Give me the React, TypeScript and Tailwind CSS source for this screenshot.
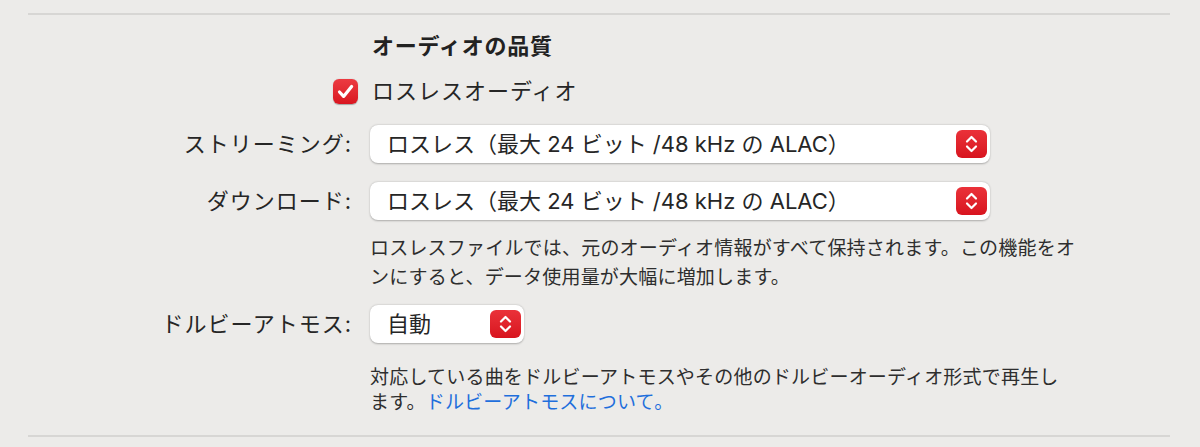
import React from "react";

const font = { fontFamily: '"Inter", "Noto Sans CJK JP", sans-serif' };

function Checkbox() {
  return (
    <div className="w-[25px] h-[25px] rounded-[6px] bg-gradient-to-b from-[#ec3a41] to-[#d9141f] shadow-[0_0.5px_1px_rgba(0,0,0,0.3)] flex items-center justify-center">
      <svg width="25" height="25" viewBox="0 0 25 25">
        <path
          d="M6.5 13 L10.6 17.4 L18.6 7.4"
          fill="none"
          stroke="white"
          strokeWidth="3.2"
          strokeLinecap="round"
          strokeLinejoin="round"
        />
      </svg>
    </div>
  );
}

function Stepper() {
  return (
    <div className="w-[31px] h-[28px] rounded-[6px] bg-gradient-to-b from-[#ea3139] to-[#d8131e] flex items-center justify-center">
      <svg width="31" height="28" viewBox="0 0 31 28">
        <path
          d="M11 11.5 L15.5 7 L20 11.5 M11 16.5 L15.5 21 L20 16.5"
          fill="none"
          stroke="white"
          strokeWidth="2.2"
          strokeLinecap="round"
          strokeLinejoin="round"
        />
      </svg>
    </div>
  );
}

function Popup({ value, width }: { value: string; width: string }) {
  return (
    <div
      className={`${width} h-[38px] bg-white rounded-[8px] shadow-[0_0.5px_2px_rgba(0,0,0,0.28)] flex items-center justify-between pl-[17px] pr-[3px]`}
    >
      <span className="text-[22px] text-[#262626] whitespace-nowrap">{value}</span>
      <Stepper />
    </div>
  );
}

function Row({ label, children }: { label: React.ReactNode; children: React.ReactNode }) {
  return (
    <div className="flex items-center gap-[18px]">
      <div className="w-[324px] flex justify-end text-[22px] tracking-[1px] text-[#262626]">{label}</div>
      <div className="flex-1">{children}</div>
    </div>
  );
}

export default function App() {
  return (
    <div className="w-full h-[447px] bg-[#ecebe9] pt-[13px] pl-[28px] pr-[30px] overflow-hidden" style={font}>
      <div className="h-[2px] bg-[#d7d6d4]" />

      <div className="mt-[16px] flex gap-[18px]">
        <div className="w-[324px]" />
        <div className="pl-[2px] text-[22px] leading-[30px] tracking-[0.8px] font-bold text-[#222]">オーディオの品質</div>
      </div>

      <div className="mt-[15px] flex items-center h-[30px]">
        <div className="w-[330px] flex justify-end">
          <Checkbox />
        </div>
        <span className="ml-[14px] text-[22px] tracking-[1px] text-[#262626]">ロスレスオーディオ</span>
      </div>

      <div className="mt-[19px]">
        <Row label="ストリーミング:">
          <Popup value="ロスレス（最大 24 ビット /48 kHz の ALAC）" width="w-[620px]" />
        </Row>
      </div>

      <div className="mt-[19px]">
        <Row label="ダウンロード:">
          <Popup value="ロスレス（最大 24 ビット /48 kHz の ALAC）" width="w-[620px]" />
        </Row>
      </div>

      <div className="mt-[14px] flex gap-[18px]">
        <div className="w-[324px]" />
        <p className="w-[760px] text-[19px] leading-[29px] tracking-[0.2px] text-[#2e2e2e]">
          ロスレスファイルでは、元のオーディオ情報がすべて保持されます。この機能をオ
          <br />
          ンにすると、データ使用量が大幅に増加します。
        </p>
      </div>

      <div className="mt-[13px]">
        <Row label="ドルビーアトモス:">
          <Popup value="自動" width="w-[154px]" />
        </Row>
      </div>

      <div className="mt-[22px] flex gap-[18px]">
        <div className="w-[324px]" />
        <p className="w-[760px] text-[19px] leading-[25px] tracking-[0.2px] text-[#2e2e2e]">
          対応している曲をドルビーアトモスやその他のドルビーオーディオ形式で再生し
          <br />
          ます。<span className="text-[#1f6fdc]">ドルビーアトモスについて。</span>
        </p>
      </div>

      <div className="mt-[20px] h-[2px] bg-[#d7d6d4]" />
    </div>
  );
}
